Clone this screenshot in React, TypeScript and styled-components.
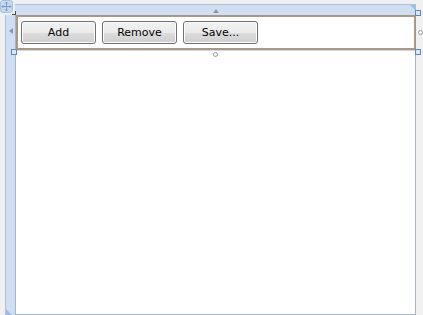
import styled, { createGlobalStyle } from 'styled-components'

const GlobalStyle = createGlobalStyle`
	html, body {
		margin: 0;
		padding: 0;
		background: #f0f0f0;
		overflow: hidden;
	}
	body {
		font-family: 'DejaVu Sans', Verdana, sans-serif;
	}
`

const Designer = styled.div`
	position: relative;
	width: 423px;
	height: 315px;
	display: grid;
	grid-template-columns: 5px 10px 401px;
	grid-template-rows: 4px 11px 300px;
`

const TopRuler = styled.div`
	grid-column: 3;
	grid-row: 2;
	position: relative;
	background: #cfdef0;
	border-top: 1px solid #a9c4e3;
	box-sizing: border-box;
	display: flex;
	justify-content: center;
	align-items: center;
`

const LeftRuler = styled.div`
	grid-column: 2;
	grid-row: 3;
	position: relative;
	background: #cfdef0;
	border-left: 1px solid #a9c4e3;
	box-sizing: border-box;
	display: flex;
	justify-content: center;
	align-items: flex-start;
	padding-top: 13px;
`

const RulerCorner = styled.div<{ $side: 'left' | 'right' }>`
	position: absolute;
	width: 0;
	height: 0;
	${(p) =>
		p.$side === 'right'
			? `top: 0; right: 0; border-top: 6px solid #9dbde4; border-left: 6px solid transparent;`
			: `bottom: 0; left: 0; border-bottom: 6px solid #9dbde4; border-right: 6px solid transparent;`}
`

const UpMarker = styled.div`
	width: 0;
	height: 0;
	border-left: 3px solid transparent;
	border-right: 3px solid transparent;
	border-bottom: 4px solid #8b97a5;
	margin-top: 1px;
`

const LeftMarker = styled.div`
	width: 0;
	height: 0;
	border-top: 3px solid transparent;
	border-bottom: 3px solid transparent;
	border-right: 4px solid #8b97a5;
`

const Canvas = styled.div`
	grid-column: 3;
	grid-row: 3;
	background: #ffffff;
	border: 1px solid #a4b6ca;
	border-top: none;
	box-sizing: border-box;
`

const Panel = styled.div`
	display: flex;
	align-items: center;
	border: 2px solid #a99a88;
	margin-right: -1px;
	padding: 1px 0;
	box-shadow: 0 1px 0 #c9d8ea;
`

const Button = styled.button`
	width: 75px;
	height: 23px;
	margin: 3px;
	padding: 0;
	border: 1px solid #707070;
	border-radius: 3px;
	background: linear-gradient(#f2f2f2 0%, #ebebeb 50%, #dddddd 50%, #cfcfcf 100%);
	box-shadow: inset 0 0 0 1px #fcfcfc;
	font-family: 'DejaVu Sans', Verdana, sans-serif;
	font-size: 11px;
	color: #000000;
`

const Handle = styled.div<{ $x: number; $y: number }>`
	position: absolute;
	left: ${(p) => p.$x}px;
	top: ${(p) => p.$y}px;
	width: 6px;
	height: 6px;
	box-sizing: border-box;
	border: 1px solid #5f86b4;
	background: #dce7f3;
`

const Dot = styled.div<{ $x: number; $y: number }>`
	position: absolute;
	left: ${(p) => p.$x}px;
	top: ${(p) => p.$y}px;
	width: 5px;
	height: 5px;
	box-sizing: border-box;
	border: 1px solid #9a9a9a;
	border-radius: 50%;
	background: #ffffff;
`

const CornerMark = styled.div`
	position: absolute;
	left: 12px;
	top: 11px;
	width: 3px;
	height: 3px;
	border-right: 1px solid #5a4a38;
	border-bottom: 1px solid #5a4a38;
`

const MoveGrip = styled.svg`
	position: absolute;
	left: 0;
	top: 0;
`

const App = () => {
	return (
		<>
			<GlobalStyle />
			<Designer>
				<TopRuler>
					<UpMarker />
					<RulerCorner $side='right' />
				</TopRuler>
				<LeftRuler>
					<LeftMarker />
					<RulerCorner $side='left' />
				</LeftRuler>
				<Canvas>
					<Panel>
						<Button>Add</Button>
						<Button>Remove</Button>
						<Button>Save...</Button>
					</Panel>
				</Canvas>

				<MoveGrip width='13' height='13' viewBox='0 0 13 13'>
					<rect x='0.5' y='0.5' width='12' height='12' rx='2.5' fill='#c8daf0' stroke='#a6c0e0' />
					<path
						d='M6.5 2 L6.5 11 M2 6.5 L11 6.5 M5 3.5 L6.5 2 L8 3.5 M5 9.5 L6.5 11 L8 9.5 M3.5 5 L2 6.5 L3.5 8 M9.5 5 L11 6.5 L9.5 8'
						fill='none'
						stroke='#7f9cc4'
						strokeWidth='1'
					/>
				</MoveGrip>
				<CornerMark />
				<Handle $x={11} $y={49} />
				<Handle $x={415} $y={10} />
				<Handle $x={415} $y={49} />
				<Dot $x={213} $y={52} />
				<Dot $x={418} $y={30} />
			</Designer>
		</>
	)
}

export default App
